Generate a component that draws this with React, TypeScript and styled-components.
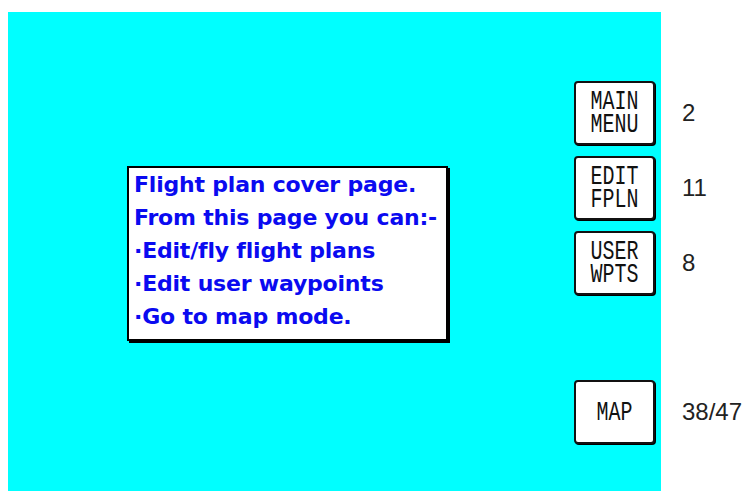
import styled, { createGlobalStyle } from 'styled-components';

const GlobalStyle = createGlobalStyle`
  html, body {
    margin: 0;
    padding: 0;
    background: #ffffff;
  }
`;

const Screen = styled.div`
  display: flex;
  align-items: flex-start;
  width: 747px;
  height: 491px;
  padding: 12px 0 0 8px;
  box-sizing: border-box;
  overflow: hidden;
`;

const Panel = styled.div`
  display: flex;
  width: 653px;
  height: 479px;
  background: #00ffff;
  box-sizing: border-box;
  padding: 69px 6px 0 119px;
`;

const InfoBox = styled.div`
  margin-top: 85px;
  width: 321px;
  height: 175px;
  box-sizing: border-box;
  background: #ffffff;
  border: 2px solid #000;
  box-shadow: 2px 2px 0 #000;
  padding: 0 0 0 5px;
  font-family: 'DejaVu Sans', Verdana, sans-serif;
  font-weight: bold;
  font-size: 22px;
  line-height: 33px;
  letter-spacing: -0.2px;
  color: #0a0af0;
  white-space: nowrap;
`;

const Line = styled.div``;

const ButtonColumn = styled.div`
  margin-left: auto;
  display: flex;
  flex-direction: column;
  gap: 11px;
`;

const SoftKey = styled.div<{ $gapBefore?: number }>`
  width: 81px;
  height: 64px;
  box-sizing: border-box;
  margin-top: ${({ $gapBefore }) => $gapBefore ?? 0}px;
  background: #ffffff;
  border: 2px solid #111;
  border-radius: 4px;
  box-shadow: 1px 1px 0 #000;
  display: flex;
  align-items: center;
  justify-content: center;
  font-family: 'Liberation Mono', 'DejaVu Sans Mono', monospace;
  font-size: 20px;
  line-height: 17px;
  color: #111;
`;

const KeyText = styled.div`
  white-space: pre-line;
  text-align: center;
  transform: scaleY(1.35);
`;

const CountColumn = styled.div`
  display: flex;
  flex-direction: column;
  gap: 11px;
  padding: 69px 0 0 21px;
`;

const Count = styled.div<{ $gapBefore?: number }>`
  height: 64px;
  margin-top: ${({ $gapBefore }) => $gapBefore ?? 0}px;
  display: flex;
  align-items: center;
  font-family: 'Liberation Sans', Arial, sans-serif;
  font-size: 24px;
  color: #222;
`;

const keys = [
  { label: 'MAIN\nMENU', count: '2' },
  { label: 'EDIT\nFPLN', count: '11' },
  { label: 'USER\nWPTS', count: '8' },
  { label: 'MAP', count: '38/47', gap: 74 },
];

export default function App() {
  return (
    <>
      <GlobalStyle />
      <Screen>
        <Panel>
          <InfoBox>
            <Line>Flight plan cover page.</Line>
            <Line>From this page you can:-</Line>
            <Line>·Edit/fly flight plans</Line>
            <Line>·Edit user waypoints</Line>
            <Line>·Go to map mode.</Line>
          </InfoBox>
          <ButtonColumn>
            {keys.map((k) => (
              <SoftKey key={k.label} $gapBefore={k.gap}>
                <KeyText>{k.label}</KeyText>
              </SoftKey>
            ))}
          </ButtonColumn>
        </Panel>
        <CountColumn>
          {keys.map((k) => (
            <Count key={k.count} $gapBefore={k.gap}>
              {k.count}
            </Count>
          ))}
        </CountColumn>
      </Screen>
    </>
  );
}
